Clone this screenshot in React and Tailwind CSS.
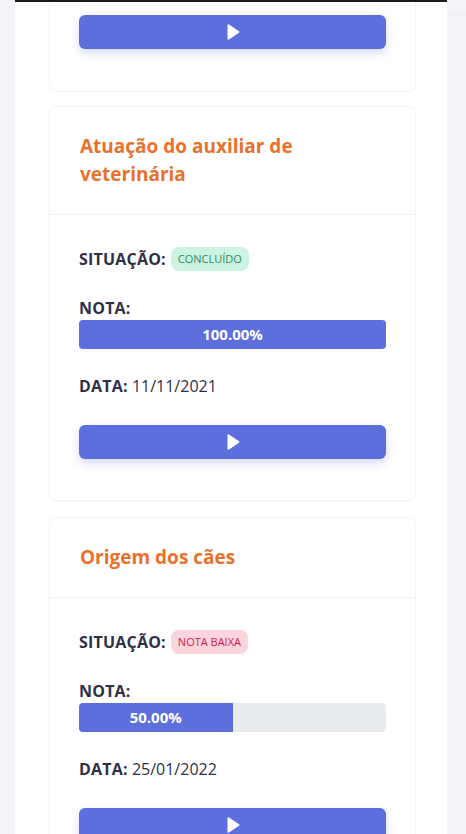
import React from 'react';

const font = { fontFamily: '"Open Sans", "Noto Sans", sans-serif' };

const PlayIcon = () => (
  <svg width="14" height="16" viewBox="0 0 14 16" fill="white">
    <path d="M1.5 1.2 C1.5 0.4 2.3 0 3 0.4 L13 7.2 C13.6 7.6 13.6 8.4 13 8.8 L3 15.6 C2.3 16 1.5 15.6 1.5 14.8 Z" />
  </svg>
);

const PlayButton = () => (
  <button className="w-full h-[34px] rounded-md bg-[#5d6fdd] flex items-center justify-center shadow-[0_4px_8px_rgba(93,111,221,0.25)]">
    <PlayIcon />
  </button>
);

const statusStyles = {
  done: 'bg-[#cdf3e2] text-[#2d8d60]',
  low: 'bg-[#fbd4dc] text-[#d11b4e]',
};

const Lesson = ({ title, status, statusLabel, grade, date }) => (
  <div className="bg-white border border-[#f2f3f6] rounded-lg shadow-[0_1px_3px_rgba(0,0,0,0.03)]">
    <div className="px-[30px] pt-[25px] pb-[26px] border-b border-[#eef0f3]">
      <h2 className="text-[19px] leading-[28px] font-bold text-[#e9712c] pr-12">{title}</h2>
    </div>
    <div className="px-[29px] pt-[32px] pb-[41px] text-[#2f2f48]">
      <div className="flex items-center gap-[5px]">
        <span className="text-[16px] font-bold tracking-[0.2px]">SITUAÇÃO:</span>
        <span className={`h-[24px] px-[7px] rounded-lg text-[11px] flex items-center ${statusStyles[status]}`}>
          {statusLabel}
        </span>
      </div>
      <div className="mt-[27px] text-[16px] font-bold leading-[20px] tracking-[0.2px]">NOTA:</div>
      <div className="mt-[2px] h-[29px] rounded-[4px] bg-[#e9ecef] overflow-hidden flex">
        <div
          className="h-full bg-[#5d6fdd] flex items-center justify-center text-white text-[15px] font-bold"
          style={{ width: `${grade}%` }}
        >
          {grade.toFixed(2)}%
        </div>
      </div>
      <div className="mt-[27px] text-[16px] leading-[20px]">
        <span className="font-bold tracking-[0.2px]">DATA:</span> {date}
      </div>
      <div className="mt-[29px]">
        <PlayButton />
      </div>
    </div>
  </div>
);

export default function App() {
  return (
    <div className="w-[466px] h-[834px] overflow-hidden flex bg-[#f3f4f9]" style={font}>
      <div className="w-[15px] shrink-0" />
      <div className="w-[432px] shrink-0 bg-white border-t-2 border-[#1a1a1a]">
        <div className="pl-[34px] pr-[31px]">
          {/* tail of the previous lesson card */}
          <div className="border-x border-b border-[#f2f3f6] rounded-b-lg px-[29px] pt-[13px] pb-[42px]">
            <PlayButton />
          </div>
          <div className="mt-[14px] flex flex-col gap-[16px]">
            <Lesson
              title="Atuação do auxiliar de veterinária"
              status="done"
              statusLabel="CONCLUÍDO"
              grade={100}
              date="11/11/2021"
            />
            <Lesson
              title="Origem dos cães"
              status="low"
              statusLabel="NOTA BAIXA"
              grade={50}
              date="25/01/2022"
            />
          </div>
        </div>
      </div>
      <div className="flex-1 border-t border-[#eceef2] mt-[14px]" />
    </div>
  );
}
